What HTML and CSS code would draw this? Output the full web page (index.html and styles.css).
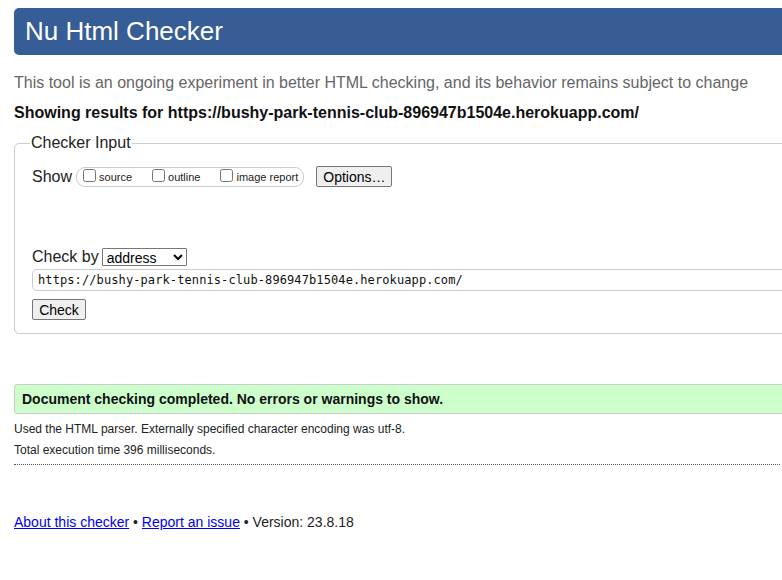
FILE: index.html
```html
<!DOCTYPE html>
<html lang="en">
<head>
<meta charset="utf-8">
<title>Nu Html Checker</title>
<link rel="stylesheet" href="styles.css">
</head>
<body>
<div class="page">
  <h1 class="title">Nu Html Checker</h1>
  <p class="intro">This tool is an ongoing experiment in better HTML checking, and its behavior remains subject to change</p>
  <p class="results-for">Showing results for https://bushy-park-tennis-club-896947b1504e.herokuapp.com/</p>
  <fieldset class="checker">
    <legend class="checker-legend">Checker Input</legend>
    <div class="show-row">
      <span class="show-label">Show</span>
      <span class="show-group">
        <label class="opt"><input type="checkbox" class="cb"><span>source</span></label>
        <label class="opt"><input type="checkbox" class="cb"><span>outline</span></label>
        <label class="opt"><input type="checkbox" class="cb"><span>image report</span></label>
      </span>
      <button class="btn options-btn" type="button">Options…</button>
    </div>
    <div class="checkby-row">
      <span class="checkby-label">Check by</span>
      <select class="checkby-select"><option>address</option></select>
    </div>
    <input class="url-input" type="text" value="https://bushy-park-tennis-club-896947b1504e.herokuapp.com/">
    <div class="check-row"><button class="btn check-btn" type="button">Check</button></div>
  </fieldset>
  <div class="success">Document checking completed. No errors or warnings to show.</div>
  <p class="details">Used the HTML parser. Externally specified character encoding was utf-8.</p>
  <p class="details">Total execution time 396 milliseconds.</p>
  <hr class="dotted">
  <p class="footer"><a href="#">About this checker</a> • <a href="#">Report an issue</a> • Version: 23.8.18</p>
</div>
</body>
</html>
```
FILE: styles.css
```css
html, body {
  margin: 0;
  padding: 0;
  overflow: hidden;
  background: #fff;
}
body {
  font-family: "Liberation Sans", Arial, sans-serif;
  color: #000;
  padding: 8px 0 0 14px;
}
.page {
  width: 820px;
}
.title {
  margin: 0;
  height: 47px;
  line-height: 46px;
  background: #365d95;
  color: #fff;
  font-size: 26px;
  font-weight: normal;
  padding-left: 11px;
  border-radius: 5px 0 0 5px;
}
.intro {
  margin: 18px 0 0;
  font-size: 16px;
  line-height: 20px;
  color: #666;
}
.results-for {
  margin: 10px 0 0;
  font-size: 16px;
  line-height: 20px;
  font-weight: bold;
  color: #111;
}
.checker {
  margin: 11px 0 0;
  padding: 0 17px 13px;
  border: 1px solid #ccc;
  border-radius: 5px 0 0 5px;
}
.checker-legend {
  padding: 0 1px;
  margin-left: -2px;
  font-size: 16px;
  line-height: 18px;
  color: #222;
}
.show-row {
  display: flex;
  align-items: center;
  margin-top: 13px;
  height: 23px;
}
.show-label {
  font-size: 16px;
  color: #222;
  margin-right: 4px;
}
.show-group {
  display: flex;
  align-items: center;
  height: 18px;
  border: 1px solid #ccc;
  border-radius: 9px;
  padding: 0 5px 0 5px;
  gap: 19px;
}
.opt {
  display: flex;
  align-items: center;
  font-size: 11px;
  color: #222;
}
.cb {
  width: 13px;
  height: 13px;
  margin: 0 3px 2px 1px;
}
.btn {
  font-family: "Liberation Sans", Arial, sans-serif;
  font-size: 14px;
  color: #000;
  background: #efefef;
  border: 1px solid #767676;
  border-radius: 2px;
  padding: 0 6px;
}
.options-btn {
  margin-left: 12px;
  height: 21px;
  width: 76px;
}
.checkby-row {
  display: flex;
  align-items: center;
  margin-top: 59px;
  height: 19px;
}
.checkby-label {
  font-size: 16px;
  color: #222;
  margin-right: 3px;
}
.checkby-select {
  width: 85px;
  height: 18px;
  font-family: "Liberation Sans", Arial, sans-serif;
  font-size: 14px;
  border: 1px solid #767676;
  border-radius: 1px;
  background: #fff;
  padding: 0;
}
.url-input {
  display: block;
  box-sizing: border-box;
  width: 800px;
  height: 22px;
  margin-top: 3px;
  padding: 0 5px;
  border: 1px solid #ccc;
  border-radius: 5px;
  font-family: "DejaVu Sans Mono", "Liberation Mono", monospace;
  font-size: 12px;
  letter-spacing: 0.1px;
  color: #111;
}
.check-row {
  margin-top: 8px;
}
.check-btn {
  width: 54px;
  height: 21px;
}
.success {
  margin-top: 50px;
  height: 28px;
  line-height: 28px;
  background: #ccffcc;
  border: 1px solid #ccc;
  border-radius: 3px 0 0 3px;
  padding-left: 7px;
  font-size: 14px;
  font-weight: bold;
  color: #111;
}
.details {
  margin: 8px 0 0;
  font-size: 12px;
  line-height: 14px;
  color: #222;
}
.details + .details {
  margin-top: 7px;
}
.dotted {
  width: 766px;
  margin: 7px 0 0;
  border: 0;
  border-top: 1px dotted #555;
  height: 0;
}
.footer {
  margin: 49px 0 0;
  font-size: 14px;
  line-height: 16px;
  color: #222;
}
.footer a {
  color: #00e;
}
```
